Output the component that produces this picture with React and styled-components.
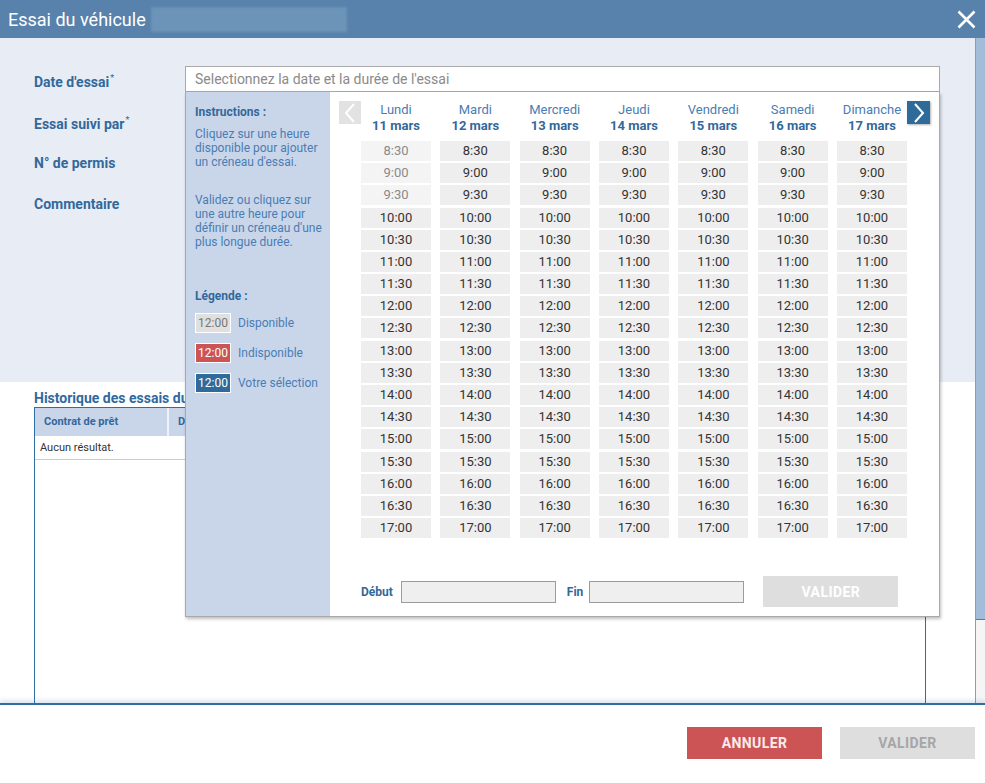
import React from 'react';
import styled, { createGlobalStyle } from 'styled-components';

const GlobalStyle = createGlobalStyle`
  * { box-sizing: border-box; }
  html, body { margin: 0; padding: 0; background: #fff; }
  body { font-family: Roboto, "Liberation Sans", Arial, sans-serif; }
`;

const Modal = styled.div`
  width: 985px;
  height: 783px;
  display: flex;
  flex-direction: column;
  overflow: hidden;
  background: white;
`;

const Header = styled.div`
  height: 38px;
  flex: none;
  background: #5882ab;
  display: flex;
  align-items: center;
  padding: 0 7px 0 8px;
`;

const Title = styled.h1`
  margin: 0;
  font-size: 18px;
  font-weight: 400;
  color: white;
`;

const Blurred = styled.span`
  width: 196px;
  height: 25px;
  margin-left: 5px;
  background: #6c93b8;
  filter: blur(1px);
`;

const CloseButton = styled.button`
  margin-left: auto;
  width: 24px;
  height: 24px;
  padding: 0;
  border: 0;
  background: none;
  display: flex;
  align-items: center;
  justify-content: center;
`;

const Body = styled.div`
  flex: 1;
  display: flex;
  min-height: 0;
`;

const Content = styled.div`
  flex: 1;
  display: flex;
  flex-direction: column;
  min-width: 0;
`;

const Scrollbar = styled.div`
  width: 10px;
  flex: none;
  display: flex;
  flex-direction: column;
  border-left: 1px solid #7fa0c6;
  background: #f5f5f5;
`;

const Thumb = styled.div`
  height: 582px;
  background: #a3bcd9;
  border-bottom: 1px solid #4d7cae;
`;

const TopSection = styled.div`
  height: 344px;
  flex: none;
  background: #e8edf5;
  padding: 28px 35px 0 34px;
`;

const FormGrid = styled.div`
  display: grid;
  grid-template-columns: 151px 1fr;
  grid-auto-rows: 40px;
`;

const Label = styled.div`
  font-size: 14px;
  font-weight: 700;
  color: #33689b;
  padding-top: ${p => p.$top || 9}px;

  sup {
    font-size: 9px;
    font-weight: 400;
    vertical-align: 6px;
    margin-left: 1px;
  }
`;

const DateField = styled.div`
  position: relative;
  height: 26px;
`;

const DateInput = styled.div`
  height: 26px;
  border: 1px solid #a9a9a9;
  background: white;
  padding: 0 9px;
  font-size: 14px;
  line-height: 24px;
  color: #8a8a8a;
`;

const Dropdown = styled.div`
  position: absolute;
  top: 26px;
  left: 0;
  width: 755px;
  height: 525px;
  background: white;
  border: 1px solid #a9a9a9;
  border-top: 0;
  box-shadow: 1px 2px 3px rgba(0, 0, 0, 0.25);
  display: flex;
  z-index: 5;
`;

const Sidebar = styled.div`
  width: 144px;
  flex: none;
  background: #c9d6ea;
  padding: 13px 3px 12px 9px;
  color: #4a7db3;
  font-size: 12px;
  line-height: 14px;
`;

const SideTitle = styled.div`
  font-weight: 700;
  color: #33689b;
  margin-bottom: ${p => p.$mb || 8}px;
`;

const SideText = styled.p`
  margin: 0 0 ${p => p.$mb || 24}px;
`;

const LegendRow = styled.div`
  display: flex;
  align-items: center;
  gap: 7px;
  margin-bottom: 10px;
`;

const LegendBox = styled.span`
  width: 36px;
  height: 20px;
  border: 1px solid white;
  background: ${p => p.$bg};
  color: ${p => p.$fg};
  font-size: 12px;
  line-height: 18px;
  text-align: center;
`;

const Calendar = styled.div`
  flex: 1;
  display: flex;
  flex-direction: column;
  padding: 9px 0 9px 9px;
`;

const CalendarTop = styled.div`
  display: flex;
  align-items: flex-start;
`;

const NavButton = styled.button`
  width: ${p => p.$w}px;
  height: 23px;
  flex: none;
  padding: 0;
  border: 0;
  background: ${p => (p.$active ? '#2f6b9a' : '#e2e2e2')};
  box-shadow: ${p => (p.$active ? '1px 1px 2px rgba(0,0,0,0.3)' : 'none')};
  display: flex;
  align-items: center;
  justify-content: center;
`;

const Days = styled.div`
  display: grid;
  grid-template-columns: repeat(7, 70px);
  column-gap: 9.33px;
  width: 546px;
`;

const DayColumn = styled.div`
  display: flex;
  flex-direction: column;
  gap: 2.2px;
`;

const DayHead = styled.div`
  text-align: center;
  height: 37.8px;
  padding-top: 1px;
  font-size: 13px;
  line-height: 16px;
  color: #4a7db3;

  strong {
    display: block;
    color: #33689b;
  }
`;

const Slot = styled.div`
  height: 20px;
  background: ${p => (p.$past ? '#f4f4f4' : '#eeeeee')};
  color: ${p => (p.$past ? '#8a8a8a' : '#333')};
  font-size: 13px;
  line-height: 20px;
  text-align: center;
`;

const BottomRow = styled.div`
  margin-top: auto;
  display: flex;
  align-items: center;
  padding-left: 22px;
`;

const SmallLabel = styled.span`
  font-size: 12px;
  font-weight: 700;
  color: #33689b;
  margin-right: ${p => p.$mr || 6}px;
`;

const RangeInput = styled.div`
  width: 155px;
  height: 22px;
  background: #efefef;
  border: 1px solid #9b9b9b;
  margin-right: ${p => p.$mr}px;
`;

const Button = styled.button`
  width: ${p => p.$w || 135}px;
  height: ${p => p.$h || 32}px;
  border: 0;
  background: ${p => p.$bg};
  color: ${p => p.$fg};
  font-family: inherit;
  font-size: ${p => p.$fs || 14}px;
  font-weight: 700;
  letter-spacing: 0.4px;
  text-transform: uppercase;
`;

const HistorySection = styled.div`
  flex: 1;
  display: flex;
  flex-direction: column;
  padding: 8px 49px 0 34px;
  min-height: 0;
`;

const HistoryTitle = styled.h2`
  margin: 0;
  font-size: 14px;
  line-height: 17px;
  font-weight: 700;
  color: #2f6aa0;
`;

const Table = styled.div`
  flex: 1;
  border: 1px solid #2e6ea4;
  border-bottom: 0;
`;

const TableHead = styled.div`
  display: grid;
  grid-template-columns: 134px 1fr;
  height: 28px;
  background: #c9d6ea;
`;

const HeadCell = styled.div`
  font-size: 11px;
  font-weight: 700;
  color: #33689b;
  line-height: 28px;
  padding-left: 9px;
  border-right: ${p => (p.$divider ? '2px solid #eef2f8' : '0')};
`;

const EmptyRow = styled.div`
  height: 24px;
  font-size: 11px;
  line-height: 24px;
  color: #333;
  padding-left: 5px;
  border-bottom: 1px solid #b9d2ea;
`;

const Footer = styled.div`
  height: 80px;
  flex: none;
  border-top: 2px solid #2f6fa0;
  box-shadow: 0 -3px 4px rgba(70, 120, 175, 0.18);
  display: flex;
  justify-content: flex-end;
  align-items: flex-start;
  gap: 18px;
  padding: 22px 10px 0 0;
  position: relative;
  z-index: 6;
  background: white;
`;

const Chevron = ({ dir, color }) => (
  <svg width="12" height="20" viewBox="0 0 12 20">
    <path
      d={dir === 'left' ? 'M10 1 L2 10 L10 19' : 'M2 1 L10 10 L2 19'}
      fill="none"
      stroke={color}
      strokeWidth="2"
    />
  </svg>
);

const days = [
  ['Lundi', '11 mars'],
  ['Mardi', '12 mars'],
  ['Mercredi', '13 mars'],
  ['Jeudi', '14 mars'],
  ['Vendredi', '15 mars'],
  ['Samedi', '16 mars'],
  ['Dimanche', '17 mars'],
];

const times = [];
for (let h = 8; h <= 17; h++) {
  if (h > 8) times.push(`${h}:00`);
  if (h < 17) times.push(`${h}:30`);
}

const pastSlots = ['8:30', '9:00', '9:30'];

const App = () => (
  <>
    <GlobalStyle />
    <Modal>
      <Header>
        <Title>Essai du véhicule</Title>
        <Blurred />
        <CloseButton>
          <svg width="19" height="19" viewBox="0 0 19 19">
            <path d="M1.5 1.5 L17.5 17.5 M17.5 1.5 L1.5 17.5" stroke="white" strokeWidth="2.6" />
          </svg>
        </CloseButton>
      </Header>

      <Body>
        <Content>
          <TopSection>
            <FormGrid>
              <Label $top={7}>Date d'essai<sup>*</sup></Label>
              <DateField>
                <DateInput>Selectionnez la date et la durée de l'essai</DateInput>
                <Dropdown>
                  <Sidebar>
                    <SideTitle>Instructions :</SideTitle>
                    <SideText>
                      Cliquez sur une heure disponible pour ajouter un créneau d'essai.
                    </SideText>
                    <SideText $mb={40}>
                      Validez ou cliquez sur une autre heure pour définir un créneau d'une plus longue durée.
                    </SideText>
                    <SideTitle $mb={10}>Légende :</SideTitle>
                    <LegendRow>
                      <LegendBox $bg="#e0e0e0" $fg="#777">12:00</LegendBox>
                      Disponible
                    </LegendRow>
                    <LegendRow>
                      <LegendBox $bg="#cd5454" $fg="#fff">12:00</LegendBox>
                      Indisponible
                    </LegendRow>
                    <LegendRow>
                      <LegendBox $bg="#2f6b9a" $fg="#fff">12:00</LegendBox>
                      Votre sélection
                    </LegendRow>
                  </Sidebar>

                  <Calendar>
                    <CalendarTop>
                      <NavButton $w={22}>
                        <Chevron dir="left" color="white" />
                      </NavButton>
                      <Days>
                        {days.map(([name, date], i) => (
                          <DayColumn key={name}>
                            <DayHead>
                              {name}
                              <strong>{date}</strong>
                            </DayHead>
                            {times.map(t => (
                              <Slot key={t} $past={i === 0 && pastSlots.includes(t)}>
                                {t}
                              </Slot>
                            ))}
                          </DayColumn>
                        ))}
                      </Days>
                      <NavButton $w={23} $active>
                        <Chevron dir="right" color="white" />
                      </NavButton>
                    </CalendarTop>

                    <BottomRow>
                      <SmallLabel $mr={8}>Début</SmallLabel>
                      <RangeInput $mr={11} />
                      <SmallLabel>Fin</SmallLabel>
                      <RangeInput $mr={19} />
                      <Button $w={135} $h={31} $bg="#dedede" $fg="#fff">Valider</Button>
                    </BottomRow>
                  </Calendar>
                </Dropdown>
              </DateField>

              <Label>Essai suivi par<sup>*</sup></Label>
              <div />
              <Label>N° de permis</Label>
              <div />
              <Label $top={10}>Commentaire</Label>
              <div />
            </FormGrid>
          </TopSection>

          <HistorySection>
            <HistoryTitle>Historique des essais du véhicule</HistoryTitle>
            <Table>
              <TableHead>
                <HeadCell $divider>Contrat de prêt</HeadCell>
                <HeadCell>Date</HeadCell>
              </TableHead>
              <EmptyRow>Aucun résultat.</EmptyRow>
            </Table>
          </HistorySection>
        </Content>
        <Scrollbar>
          <Thumb />
        </Scrollbar>
      </Body>

      <Footer>
        <Button $bg="#cd5454" $fg="#fbeaea">Annuler</Button>
        <Button $bg="#dedede" $fg="#a6a6a6">Valider</Button>
      </Footer>
    </Modal>
  </>
);

export default App;
